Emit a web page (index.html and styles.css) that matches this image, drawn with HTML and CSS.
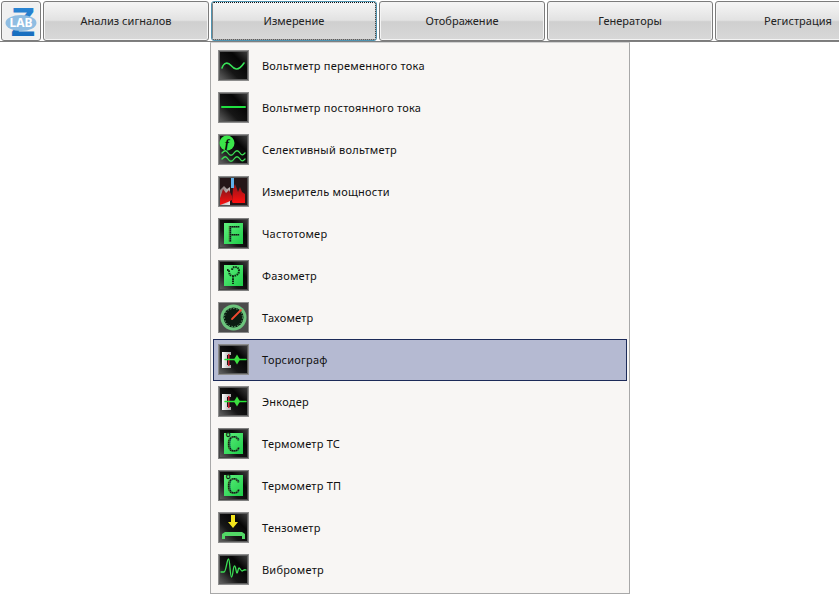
FILE: index.html
```html
<!DOCTYPE html>
<html lang="ru">
<head>
<meta charset="utf-8">
<title>ZETLAB</title>
<link rel="stylesheet" href="styles.css">
</head>
<body>
<svg class="defs" width="0" height="0" aria-hidden="true">
  <defs>
    <linearGradient id="sheen" x1="0" y1="1" x2="1" y2="0">
      <stop offset="0" stop-color="#5e5e5e"/><stop offset=".35" stop-color="#161616"/><stop offset=".7" stop-color="#060606"/><stop offset="1" stop-color="#3a3a3a"/>
    </linearGradient>
    <linearGradient id="lcd" x1="0" y1="0" x2="1" y2="1">
      <stop offset="0" stop-color="#62f07e"/><stop offset="1" stop-color="#1ccc48"/>
    </linearGradient>
    <linearGradient id="red" x1="0" y1="0" x2="0" y2="1">
      <stop offset="0" stop-color="#8a1418"/><stop offset="1" stop-color="#ff1010"/>
    </linearGradient>
    <linearGradient id="grayfade" x1="0" y1="0" x2="1" y2="1">
      <stop offset="0" stop-color="#7a6a6a"/><stop offset="1" stop-color="#f0eeee"/>
    </linearGradient>
    <linearGradient id="bracket" x1="0" y1="0" x2="1" y2="0">
      <stop offset="0" stop-color="#ffffff"/><stop offset="1" stop-color="#a8a8a8"/>
    </linearGradient>
    <linearGradient id="zblue" x1="0" y1="0" x2="0" y2="1">
      <stop offset="0" stop-color="#2f8bd8"/><stop offset="1" stop-color="#1266b8"/>
    </linearGradient>
    <pattern id="dotted" width="2" height="2" patternUnits="userSpaceOnUse">
      <rect width="2" height="2" fill="#3b7a48"/>
      <rect width="1.400" height="1.400" fill="#08200e"/>
    </pattern>
    <symbol id="frame" viewBox="0 0 31 31">
      <rect width="31" height="31" fill="#8c8c8c"/>
      <rect x="1" y="1" width="29" height="29" fill="#5c5c5c"/>
      <rect x="2" y="2" width="27" height="27" fill="url(#sheen)"/>
    </symbol>
    <symbol id="lcdframe" viewBox="0 0 31 31">
      <rect width="31" height="31" fill="#808080"/>
      <rect x="1" y="1" width="29" height="29" fill="#444"/>
      <rect x="2" y="2" width="27" height="27" fill="url(#sheen)"/>
      <rect x="6" y="5" width="19" height="21" fill="url(#lcd)"/>
    </symbol>
    <symbol id="shaft" viewBox="0 0 31 31">
      <rect width="31" height="31" fill="#8c8c8c"/>
      <rect x="1" y="1" width="29" height="29" fill="#5c5c5c"/>
      <rect x="2" y="2" width="27" height="27" fill="url(#sheen)"/>
      <path d="M4 8h9v3H9v10h4v3H4z" fill="url(#bracket)"/>
      <rect x="10" y="10" width="1.500" height="12" fill="#d02030"/>
      <path d="M7 15.500h21" class="bright"/>
      <path d="M16 15.500l3-5 3 5-3 5z" fill="#3de040"/>
    </symbol>
  </defs>
</svg>

<header class="toolbar">
  <button class="btn logo" type="button" aria-label="ZETLAB">
    <svg class="logo-art" width="36" height="36" viewBox="0 0 36 36">
      <text x="20" y="33" class="logo-z">Z</text>
      <ellipse cx="18" cy="20" rx="15.500" ry="8" fill="#8fbde2"/>
      <text x="18" y="24" class="logo-text">LAB</text>
    </svg>
  </button>
  <button class="btn" type="button"><span class="lbl">Анализ сигналов</span></button>
  <button class="btn active" type="button"><span class="lbl">Измерение</span></button>
  <button class="btn" type="button"><span class="lbl">Отображение</span></button>
  <button class="btn" type="button"><span class="lbl">Генераторы</span></button>
  <button class="btn" type="button"><span class="lbl">Регистрация</span></button>
</header>

<ul class="menu">
  <li class="item">
    <svg class="ico" viewBox="0 0 31 31"><use href="#frame"/><path d="M4 18C6 12 10 12 13 15.500S20 22 26 13" class="line"/></svg>
    <span>Вольтметр переменного тока</span>
  </li>
  <li class="item">
    <svg class="ico" viewBox="0 0 31 31"><use href="#frame"/><path d="M4 15h23" class="line flat"/></svg>
    <span>Вольтметр постоянного тока</span>
  </li>
  <li class="item">
    <svg class="ico" viewBox="0 0 31 31"><use href="#frame"/>
      <circle cx="9" cy="9" r="7.500" fill="#3be64a"/>
      <text x="9" y="14" class="glyph-f">f</text>
      <path d="M4 19c3-3 4-3 6 0s4 3 6 0 4-3 6 0 3 2 5 0M4 25c3-3 4-3 6 0s4 3 6 0 4-3 6 0 3 2 5 0" class="wave"/></svg>
    <span>Селективный вольтметр</span>
  </li>
  <li class="item">
    <svg class="ico" viewBox="0 0 31 31">
      <rect width="31" height="31" fill="#8c8c8c"/><rect x="1" y="1" width="29" height="29" fill="#555"/><rect x="2" y="2" width="27" height="27" fill="#241618"/>
      <path d="M2 29V14l4-4 3 3 3-2v18z" fill="url(#grayfade)"/>
      <path d="M2 22l3-9 3 4 3-3 3 6v4l-4 2-8 3z" fill="url(#red)"/>
      <path d="M14 26l1-14 2-4 2 5 1 3 2-5 2 5 3 2v9H15z" fill="url(#red)"/>
      <rect x="13" y="2" width="3" height="10" fill="#5fb0ea"/>
    </svg>
    <span>Измеритель мощности</span>
  </li>
  <li class="item">
    <svg class="ico" viewBox="0 0 31 31"><use href="#lcdframe"/><text x="16" y="24" class="lcd-text">F</text></svg>
    <span>Частотомер</span>
  </li>
  <li class="item">
    <svg class="ico" viewBox="0 0 31 31"><use href="#lcdframe"/><path d="M9 10h2c0 4 1 6 4 6s6-2 6-5-2-4-4-4-3 2-3 3M15 16v8" class="dots"/></svg>
    <span>Фазометр</span>
  </li>
  <li class="item">
    <svg class="ico" viewBox="0 0 31 31">
      <rect width="31" height="31" fill="#8c8c8c"/><rect x="1" y="1" width="29" height="29" fill="#4c4c4c"/>
      <circle cx="15.500" cy="15.500" r="13" fill="#6cc47c"/>
      <circle cx="15.500" cy="15.500" r="10" fill="#0c1c12"/>
      <circle cx="15.500" cy="15.500" r="9" class="ticks"/>
      <path d="M14 17L23 8" class="needle"/>
    </svg>
    <span>Тахометр</span>
  </li>
  <li class="item selected">
    <svg class="ico" viewBox="0 0 31 31"><use href="#shaft"/></svg>
    <span>Торсиограф</span>
  </li>
  <li class="item">
    <svg class="ico" viewBox="0 0 31 31"><use href="#shaft"/></svg>
    <span>Энкодер</span>
  </li>
  <li class="item">
    <svg class="ico" viewBox="0 0 31 31"><use href="#lcdframe"/><text x="6" y="24" class="lcd-temp"><tspan class="lcd-deg" dy="-9">°</tspan><tspan dy="9">C</tspan></text></svg>
    <span>Термометр ТС</span>
  </li>
  <li class="item">
    <svg class="ico" viewBox="0 0 31 31"><use href="#lcdframe"/><text x="6" y="24" class="lcd-temp"><tspan class="lcd-deg" dy="-9">°</tspan><tspan dy="9">C</tspan></text></svg>
    <span>Термометр ТП</span>
  </li>
  <li class="item">
    <svg class="ico" viewBox="0 0 31 31"><use href="#frame"/>
      <path d="M13 3h4v7h3l-5 6-5-6h3z" fill="#f2e21c"/>
      <path d="M4 27v-5l3-2h17l3 2v5h-3v-3H7v3z" fill="#52d866"/>
    </svg>
    <span>Тензометр</span>
  </li>
  <li class="item">
    <svg class="ico" viewBox="0 0 31 31"><use href="#frame"/>
      <path d="M3 18h3C8 18 9 5 10.500 5S12 23 13.500 23 15 12 16.500 12 18 19 19 19 20 14 21 14 23 17 24 17 26 15 28 16" class="wave"/>
    </svg>
    <span>Виброметр</span>
  </li>
</ul>
</body>
</html>
```

FILE: styles.css
```css
* { box-sizing: border-box; }

html, body {
  margin: 0;
  height: 100%;
  background: #fff;
  overflow: hidden;
}

body {
  font-family: "Noto Sans", "Open Sans", sans-serif;
  font-size: 11px;
  color: #111;
  position: relative;
}

.defs { position: absolute; }

.toolbar {
  display: flex;
  gap: 2px;
  height: 42px;
  padding: 1px 0 0 1px;
  border-bottom: 1px solid #808080;
  width: 100%;
  overflow-x: clip;
  overflow-y: visible;
}

.btn {
  flex: 0 0 166px;
  height: 40px;
  padding: 0 0 2px;
  border: 1px solid #7c7c7c;
  border-radius: 3px;
  font: inherit;
  letter-spacing: .03px;
  color: #222;
  background: linear-gradient(#f6f6f6 0, #e2e2e2 48%, #cfcfcf 52%, #d8d8d8 100%);
  box-shadow: inset 0 0 0 1px #f4f4f4;
}

.logo {
  flex: 0 0 40px;
  display: flex;
  align-items: center;
  justify-content: center;
  padding: 0;
  background: #f0f0f0;
  overflow: visible;
}

.logo-art { overflow: visible; }

.logo-z {
  font: bold 40px "Liberation Sans", sans-serif;
  fill: url(#zblue);
  text-anchor: middle;
}

.logo-text {
  font: bold 12px "Noto Sans", sans-serif;
  fill: #fff;
  text-anchor: middle;
}

.active {
  border-color: #4f93b0;
  outline: 1px dotted #111;
  outline-offset: -2px;
}

.menu {
  position: absolute;
  left: 210px;
  top: 42px;
  width: 420px;
  height: 552px;
  margin: 0;
  padding: 2px 2px 0;
  list-style: none;
  background: #f8f6f4;
  border: 1px solid #a8a8a8;
  border-top-color: #d0d0d0;
}

.item {
  display: flex;
  align-items: center;
  gap: 13px;
  height: 42px;
  padding: 0 0 2px 4px;
  letter-spacing: .22px;
  border: 1px solid transparent;
}

.selected {
  background: #b5bad2;
  border-color: #1c2a58;
}

.ico {
  flex: none;
  width: 31px;
  height: 31px;
}

.line, .bright, .wave, .dots, .needle {
  fill: none;
  stroke-linecap: round;
  stroke-linejoin: round;
}

.line { stroke: #38e258; stroke-width: 1.6; }
.flat { stroke: #20e040; stroke-width: 2; }
.bright { stroke: #28e838; stroke-width: 1.5; }
.wave { stroke: #3ce056; stroke-width: 1.3; }
.dots { stroke: #0d2a12; stroke-width: 2; stroke-dasharray: 1.6 .7; stroke-linecap: butt; }
.needle { stroke: #ee4a30; stroke-width: 1.8; }
.ticks { fill: none; stroke: #7fdc90; stroke-width: 1; stroke-dasharray: 1 2; }

.glyph-f {
  font: italic bold 13px "Liberation Serif", serif;
  fill: #0a0a0a;
  text-anchor: middle;
}

.lcd-text {
  font: 24px "Liberation Mono", monospace;
  fill: url(#dotted);
  text-anchor: middle;
}

.lcd-temp {
  font: 24px "Liberation Mono", monospace;
  fill: url(#dotted);
  letter-spacing: -6px;
}

.lcd-deg {
  font-size: 14px;
  font-weight: bold;
  fill: #0d2a12;
}
```
